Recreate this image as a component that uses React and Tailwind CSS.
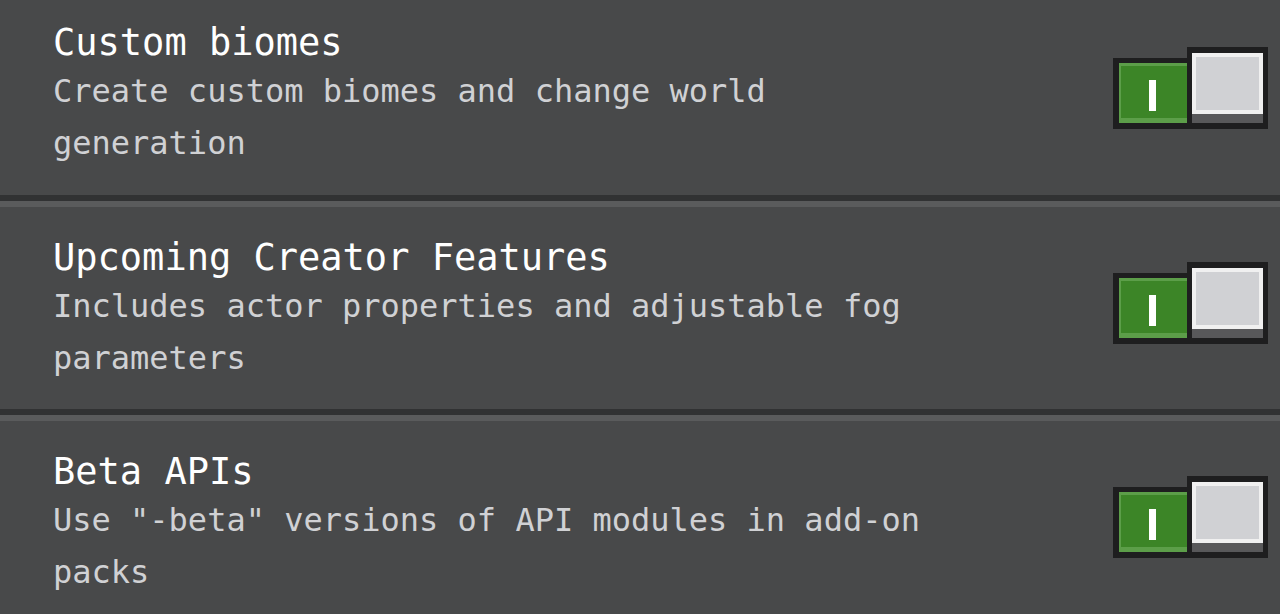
const settings = [
  {
    title: "Custom biomes",
    description: "Create custom biomes and change world generation",
  },
  {
    title: "Upcoming Creator Features",
    description: "Includes actor properties and adjustable fog parameters",
  },
  {
    title: "Beta APIs",
    description: 'Use "-beta" versions of API modules in add-on packs',
  },
];

const Toggle = () => {
  return (
    <div className="mt-[26px] flex items-end shrink-0">
      {/* green "on" track */}
      <div className="w-[74px] h-[71px] bg-[#1e1e1f] pl-[6px] pt-[5px] pb-[6px]">
        <div className="w-full h-full flex flex-col bg-[#5c9e49]">
          <div className="flex-1 mt-[3px] ml-[2px] bg-[#3c8527] flex items-center justify-center">
            <div className="w-[7px] h-[31px] bg-white mt-[6px] mr-[3px]"></div>
          </div>
          <div className="h-[5px]"></div>
        </div>
      </div>
      {/* knob */}
      <div className="w-[81px] h-[82px] bg-[#1e1e1f] px-[5px] py-[6px]">
        <div className="w-full h-full flex flex-col bg-[#58585a]">
          <div className="h-[61px] border-4 border-[#f0f0f0] bg-[#d0d1d4]"></div>
        </div>
      </div>
    </div>
  );
};

const SettingRow = ({ title, description, first }) => {
  return (
    <div
      className={`flex items-start justify-between pl-[53px] pr-3 ${
        first ? "pt-[21px] pb-[26px]" : "pt-[29px] pb-[25px]"
      }`}
    >
      <div className="w-[900px]">
        <div className="text-[37px] leading-[44px] text-white">{title}</div>
        <div className="text-[32px] leading-[52px] text-[#d0d1d4]">{description}</div>
      </div>
      <Toggle />
    </div>
  );
};

export default function App() {
  return (
    <div
      className="w-[1280px] h-[614px] overflow-hidden bg-[#48494a]"
      style={{ fontFamily: '"DejaVu Sans Mono", "Liberation Mono", monospace' }}
    >
      {settings.map((item, index) => (
        <div key={index}>
          <SettingRow title={item.title} description={item.description} first={index === 0} />
          {index < settings.length - 1 && (
            <div>
              <div className="h-[6px] bg-[#313233]"></div>
              <div className="h-[6px] bg-[#5a5b5c]"></div>
            </div>
          )}
        </div>
      ))}
    </div>
  );
}
